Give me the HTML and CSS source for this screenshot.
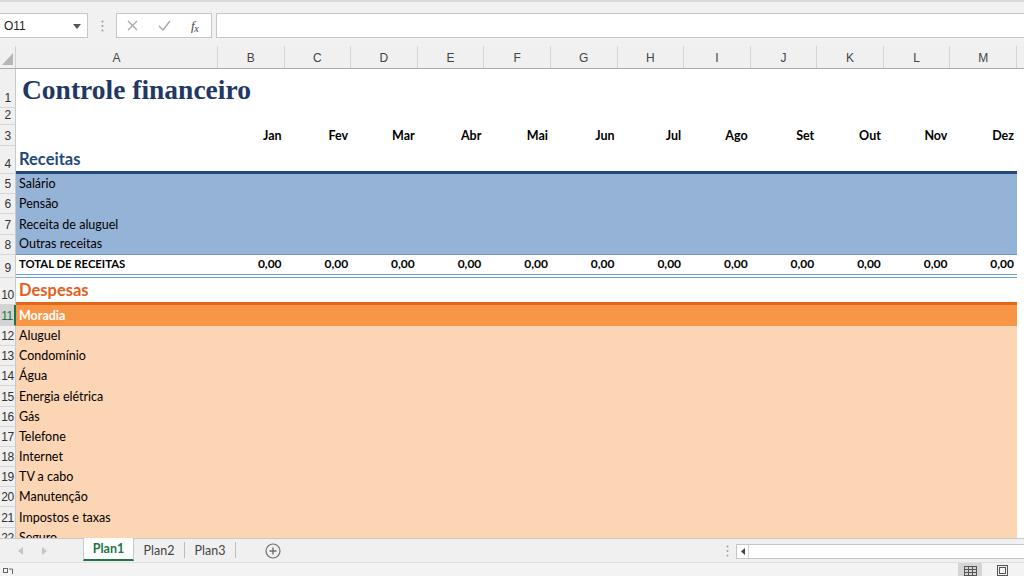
FILE: index.html
```html
<!DOCTYPE html>
<html lang="pt-BR">
<head>
<meta charset="utf-8">
<title>Controle financeiro</title>
<link rel="stylesheet" href="styles.css">
</head>
<body>
<div class="app">
  <div class="topbar">
    <div class="name-box">
      <span class="name-text">O11</span>
      <svg class="caret" width="8" height="5" viewBox="0 0 8 5"><polygon points="0,0 8,0 4,5" fill="#555"/></svg>
    </div>
    <div class="grip">
      <svg width="3" height="12" viewBox="0 0 3 12"><circle cx="1.5" cy="1.5" r="1" fill="#9a9a9a"/><circle cx="1.5" cy="6" r="1" fill="#9a9a9a"/><circle cx="1.5" cy="10.5" r="1" fill="#9a9a9a"/></svg>
    </div>
    <div class="fx-buttons">
      <svg class="btn-icon" width="11" height="11" viewBox="0 0 11 11"><path d="M1 1 L10 10 M10 1 L1 10" stroke="#a8a8a8" stroke-width="1.3" fill="none"/></svg>
      <svg class="btn-icon" width="13" height="11" viewBox="0 0 13 11"><path d="M1 6 L5 10 L12 1" stroke="#a8a8a8" stroke-width="1.4" fill="none"/></svg>
      <span class="fx">f<span class="fx-sub">x</span></span>
    </div>
    <div class="formula-input"></div>
  </div>

  <div class="sheet">
    <div class="colhead">
      <div class="corner"><svg width="11" height="12" viewBox="0 0 11 12"><polygon points="11,0 11,12 0,12" fill="#b5b5b5"/></svg></div>
      <div class="cols">
        <div class="ch">A</div><div class="ch">B</div><div class="ch">C</div><div class="ch">D</div><div class="ch">E</div><div class="ch">F</div><div class="ch">G</div><div class="ch">H</div><div class="ch">I</div><div class="ch">J</div><div class="ch">K</div><div class="ch">L</div><div class="ch">M</div>
      </div>
      <div class="ch filler"></div>
    </div>

    <div class="row h-title"><div class="rh">1</div><div class="cells"><div class="c title">Controle financeiro</div></div></div>
    <div class="row h-17"><div class="rh">2</div><div class="cells"></div></div>
    <div class="row h-21"><div class="rh">3</div>
      <div class="cells months">
        <div class="c"></div><div class="c num">Jan</div><div class="c num">Fev</div><div class="c num">Mar</div><div class="c num">Abr</div><div class="c num">Mai</div><div class="c num">Jun</div><div class="c num">Jul</div><div class="c num">Ago</div><div class="c num">Set</div><div class="c num">Out</div><div class="c num">Nov</div><div class="c num">Dez</div>
      </div>
    </div>
    <div class="row h-28"><div class="rh">4</div><div class="cells sec-blue"><div class="c sec-title blue">Receitas</div></div></div>
    <div class="row h-20"><div class="rh">5</div><div class="cells fill-blue"><div class="c">Salário</div></div></div>
    <div class="row h-20"><div class="rh">6</div><div class="cells fill-blue"><div class="c">Pensão</div></div></div>
    <div class="row h-20"><div class="rh">7</div><div class="cells fill-blue"><div class="c">Receita de aluguel</div></div></div>
    <div class="row h-20"><div class="rh">8</div><div class="cells fill-blue last-blue"><div class="c">Outras receitas</div></div></div>
    <div class="row h-23"><div class="rh">9</div>
      <div class="cells total">
        <div class="c">TOTAL DE RECEITAS</div><div class="c num">0,00</div><div class="c num">0,00</div><div class="c num">0,00</div><div class="c num">0,00</div><div class="c num">0,00</div><div class="c num">0,00</div><div class="c num">0,00</div><div class="c num">0,00</div><div class="c num">0,00</div><div class="c num">0,00</div><div class="c num">0,00</div><div class="c num">0,00</div>
      </div>
    </div>
    <div class="row h-27"><div class="rh">10</div><div class="cells sec-orange"><div class="c sec-title orange">Despesas</div></div></div>
    <div class="row h-21"><div class="rh rh-sel">11</div><div class="cells fill-orange"><div class="c cat">Moradia</div></div></div>
    <div class="row h-20"><div class="rh">12</div><div class="cells fill-peach"><div class="c">Aluguel</div></div></div>
    <div class="row h-20"><div class="rh">13</div><div class="cells fill-peach"><div class="c">Condomínio</div></div></div>
    <div class="row h-20"><div class="rh">14</div><div class="cells fill-peach"><div class="c">Água</div></div></div>
    <div class="row h-20"><div class="rh">15</div><div class="cells fill-peach"><div class="c">Energia elétrica</div></div></div>
    <div class="row h-20"><div class="rh">16</div><div class="cells fill-peach"><div class="c">Gás</div></div></div>
    <div class="row h-20"><div class="rh">17</div><div class="cells fill-peach"><div class="c">Telefone</div></div></div>
    <div class="row h-20"><div class="rh">18</div><div class="cells fill-peach"><div class="c">Internet</div></div></div>
    <div class="row h-20"><div class="rh">19</div><div class="cells fill-peach"><div class="c">TV a cabo</div></div></div>
    <div class="row h-20"><div class="rh">20</div><div class="cells fill-peach"><div class="c">Manutenção</div></div></div>
    <div class="row h-20"><div class="rh">21</div><div class="cells fill-peach"><div class="c">Impostos e taxas</div></div></div>
    <div class="row h-20"><div class="rh">22</div><div class="cells fill-peach"><div class="c">Seguro</div></div></div>
  </div>

  <div class="tabbar">
    <div class="tab-nav">
      <svg width="5" height="8" viewBox="0 0 5 8"><polygon points="5,0 5,8 0,4" fill="#c4c4c4"/></svg>
      <svg width="5" height="8" viewBox="0 0 5 8"><polygon points="0,0 0,8 5,4" fill="#c4c4c4"/></svg>
    </div>
    <div class="tab active">Plan1</div>
    <div class="tab">Plan2</div>
    <div class="tab">Plan3</div>
    <div class="add-sheet">
      <svg width="16" height="16" viewBox="0 0 16 16"><circle cx="8" cy="8" r="7" stroke="#6d6d6d" stroke-width="1.2" fill="none"/><path d="M8 4.5 V11.5 M4.5 8 H11.5" stroke="#6d6d6d" stroke-width="1.4"/></svg>
    </div>
    <div class="tab-spacer"></div>
    <div class="grip small">
      <svg width="3" height="12" viewBox="0 0 3 12"><circle cx="1.5" cy="1.5" r="1" fill="#a0a0a0"/><circle cx="1.5" cy="6" r="1" fill="#a0a0a0"/><circle cx="1.5" cy="10.5" r="1" fill="#a0a0a0"/></svg>
    </div>
    <div class="hscroll">
      <div class="hs-arrow"><svg width="4" height="7" viewBox="0 0 4 7"><polygon points="4,0 4,7 0,3.5" fill="#444"/></svg></div>
    </div>
  </div>

  <div class="statusbar">
    <svg class="macro" width="10" height="8" viewBox="0 0 10 8"><rect x="0.5" y="1.5" width="4" height="4" fill="none" stroke="#666"/><path d="M6 2 H9.5 V7" stroke="#666" fill="none"/></svg>
    <div class="status-spacer"></div>
    <div class="view-btn active">
      <svg width="13" height="10" viewBox="0 0 13 10"><rect x="0.5" y="0.5" width="12" height="9" fill="none" stroke="#555"/><path d="M0.5 3.5 H12.5 M0.5 6.5 H12.5 M4.5 0.5 V9.5 M8.5 0.5 V9.5" stroke="#555"/></svg>
    </div>
    <div class="view-btn">
      <svg width="11" height="11" viewBox="0 0 11 11"><rect x="0.5" y="0.5" width="10" height="10" fill="none" stroke="#555"/><rect x="2.5" y="2.5" width="6" height="6" fill="none" stroke="#555"/></svg>
    </div>
  </div>
</div>
</body>
</html>
```

FILE: styles.css
```css
* { box-sizing: border-box; }
html, body { margin: 0; padding: 0; }
body {
  width: 1024px;
  height: 576px;
  overflow: hidden;
  background: #ffffff;
  font-family: Lato, "Liberation Sans", sans-serif;
  color: #000;
}
.app {
  width: 1024px;
  height: 576px;
  display: flex;
  flex-direction: column;
  overflow: hidden;
}

/* ---------- formula bar ---------- */
.topbar {
  height: 46px;
  flex: none;
  background: #f1f1f1;
  border-top: 2px solid #dadada;
  display: flex;
  align-items: flex-start;
  padding-top: 11px;
}
.name-box {
  width: 88px;
  height: 25px;
  background: #fff;
  border: 1px solid #c6c6c6;
  border-left: none;
  display: flex;
  align-items: center;
  justify-content: space-between;
  padding: 0 6px 0 4px;
  font-family: "Liberation Sans", sans-serif;
  font-size: 12px;
  color: #222;
}
.caret { margin-top: 1px; }
.grip {
  width: 28px;
  height: 25px;
  display: flex;
  align-items: center;
  justify-content: center;
}
.fx-buttons {
  width: 96px;
  height: 25px;
  background: #fff;
  border: 1px solid #c6c6c6;
  display: flex;
  align-items: center;
  gap: 20px;
  padding: 0 0 0 10px;
}
.fx {
  font-family: "Liberation Serif", serif;
  font-style: italic;
  font-size: 13px;
  color: #444;
  letter-spacing: -0.5px;
}
.fx-sub { font-size: 10px; position: relative; top: 2px; }
.formula-input {
  flex: 1;
  height: 25px;
  margin-left: 4px;
  background: #fff;
  border: 1px solid #c6c6c6;
  border-right: none;
}

/* ---------- sheet ---------- */
.sheet {
  height: 492px;
  flex: none;
  overflow: hidden;
  background: #fff;
}
.colhead {
  height: 23px;
  display: flex;
  background: #f0f0f0;
  border-bottom: 1px solid #ababab;
}
.corner {
  width: 16px;
  flex: none;
  border-right: 1px solid #d0d0d0;
  display: flex;
  align-items: flex-end;
  justify-content: flex-end;
  padding: 0 2px 3px 0;
}
.cols {
  width: 1001px;
  flex: none;
  display: grid;
  grid-template-columns: 202px repeat(12, 1fr);
}
.ch {
  border-right: 1px solid #d4d4d4;
  font-family: "Liberation Sans", sans-serif;
  font-size: 12px;
  color: #444;
  display: flex;
  align-items: center;
  justify-content: center;
  padding-top: 2px;
}
.ch.filler { flex: 1; border-right: none; }

.row { display: flex; }
.h-title { height: 39px; }
.h-17 { height: 17px; }
.h-20 { height: 20.2px; }
.h-21 { height: 21px; }
.h-23 { height: 23px; }
.h-27 { height: 27px; }
.h-28 { height: 28px; }

.rh {
  width: 16px;
  flex: none;
  background: #f0f0f0;
  border-right: 1px solid #c9c9c9;
  border-bottom: 1px solid #d6d6d6;
  font-family: "Liberation Sans", sans-serif;
  font-size: 12px;
  color: #333;
  display: flex;
  align-items: flex-end;
  justify-content: center;
  padding-bottom: 2px;
  letter-spacing: -0.5px;
}
.rh-sel {
  background: #d3d3d3;
  color: #217346;
  border-right: 2px solid #217346;
}
.cells {
  width: 1001px;
  flex: none;
  display: grid;
  grid-template-columns: 202px repeat(12, 1fr);
  align-items: end;
  font-size: 12.5px;
}
.c {
  padding: 0 3px 2px 3px;
  white-space: nowrap;
  overflow: visible;
  line-height: 16px;
}
.num { text-align: right; padding-right: 3px; }

.title {
  font-family: "Liberation Serif", serif;
  font-weight: bold;
  font-size: 27.5px;
  line-height: 30px;
  color: #1f3864;
  padding-left: 6px;
  padding-bottom: 3px;
}
.months { font-weight: bold; }
.sec-title {
  font-weight: bold;
  font-size: 16.5px;
  line-height: 20px;
  padding-bottom: 2px;
}
.blue { color: #1f497d; }
.orange { color: #e35f1a; font-size: 16.5px; }
.sec-blue { border-bottom: 3px solid #23487e; }
.sec-orange { border-bottom: 3px solid #e4661b; }
.fill-blue { background: #95b3d7; }
.last-blue { border-bottom: 1px solid #6f98cf; }
.total {
  font-weight: bold;
  font-size: 12px;
  border-bottom: 4px double #6e9bd8;
}
.total .c:first-child { font-size: 11.3px; }
.total .c { padding-bottom: 2px; }
.fill-orange { background: #f79646; }
.cat { color: #fff; font-weight: bold; }
.fill-peach { background: #fcd5b4; }

/* ---------- tab bar ---------- */
.tabbar {
  height: 24px;
  flex: none;
  background: #f0f0f0;
  border-top: 1px solid #c8c8c8;
  display: flex;
  align-items: stretch;
  font-size: 12.5px;
}
.tab-nav {
  width: 83px;
  display: flex;
  align-items: center;
  gap: 19px;
  padding-left: 18px;
}
.tab {
  width: 51px;
  display: flex;
  align-items: center;
  justify-content: center;
  color: #444;
  border-right: 1px solid #bdbdbd;
  margin: 3px 0 4px 0;
}
.tab.active {
  margin: -1px 0 1px 0;
  background: #fff;
  color: #217346;
  font-weight: bold;
  border-right: 1px solid #c8c8c8;
  border-left: 1px solid #c8c8c8;
  border-bottom: 2px solid #217346;
}
.add-sheet {
  width: 74px;
  display: flex;
  align-items: center;
  justify-content: center;
}
.tab-spacer { flex: 1; }
.grip.small { width: 14px; height: auto; margin-right: 2px; }
.hscroll {
  width: 288px;
  margin: 5px 0 3px 0;
  background: #fff;
  border: 1px solid #c6c6c6;
  border-right: none;
  display: flex;
}
.hs-arrow {
  width: 12px;
  border-right: 1px solid #d6d6d6;
  display: flex;
  align-items: center;
  justify-content: center;
}

/* ---------- status bar ---------- */
.statusbar {
  height: 14px;
  flex: none;
  background: #f3f3f3;
  border-top: 1px solid #e0e0e0;
  display: flex;
  align-items: flex-end;
  padding-left: 3px;
}
.macro { margin-bottom: 1px; }
.status-spacer { flex: 1; }
.view-btn {
  width: 24px;
  height: 13px;
  display: flex;
  align-items: flex-end;
  justify-content: center;
  margin-right: 10px;
  overflow: hidden;
}
.view-btn.active { background: #d5d5d5; margin-right: 8px; }
```
